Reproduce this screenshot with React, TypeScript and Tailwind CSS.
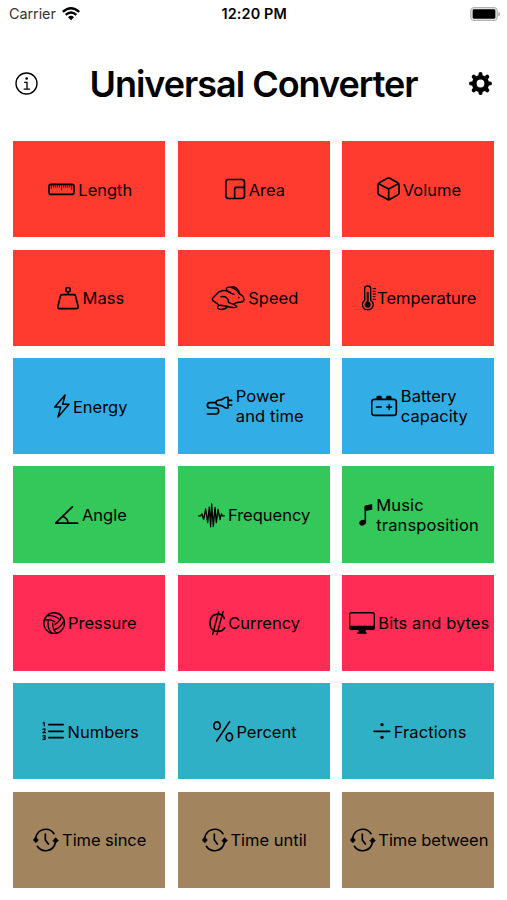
import type { ReactNode } from "react";

type GlyphProps = { box: string; size: string; children: ReactNode };

function Glyph({ box, size, children }: GlyphProps) {
  return (
    <svg
      viewBox={box}
      className={`h-7 shrink-0 ${size}`}
      fill="none"
      stroke="currentColor"
      strokeWidth="5"
      strokeLinecap="round"
      strokeLinejoin="round"
      aria-hidden="true"
    >
      {children}
    </svg>
  );
}

function Clock({ size, box }: { size: string; box: string }) {
  return (
    <Glyph box={box} size={size}>
      <path d="M110 470A30 30 0 0 1 164 460M168 488A30 30 0 0 1 114 498M138 461V479L147 491" />
      <path d="M102 479L109 470L117 479L110 487ZM161 481L169 472L177 481L169 488Z" fill="currentColor" strokeWidth="2" />
    </Glyph>
  );
}

type Tile = { label: string; text: string; color: string; icon: ReactNode };

const RED = "bg-[#ff3b30]";
const BLUE = "bg-[#32ade6]";
const GREEN = "bg-[#34c759]";
const PINK = "bg-[#ff2d55]";
const TEAL = "bg-[#30b0c7]";
const BROWN = "bg-[#a2845e]";

const tiles: Tile[] = [
  {
    label: "Length",
    text: "w-[52.9px] pl-[0.6px]",
    color: RED,
    icon: (
      <Glyph box="144 136 89.1 84" size="w-[29.7px]">
        <rect x="147" y="164" width="75" height="30" rx="6" />
        <path strokeWidth="2.4" d="M154 166v10M160 166v7M166 166v7M172 166v7M178 166v7M185 166v15M191 166v7M197 166v7M203 166v7M209 166v7M215 166v13" />
      </Glyph>
    ),
  },
  {
    label: "Area",
    text: "w-[34.1px]",
    color: RED,
    icon: (
      <Glyph box="165 136 71.1 84" size="w-[23.7px]">
        <rect x="167.500" y="149.500" width="56" height="57" rx="8" />
        <path d="M223 173H199Q194 173 194 178V206" />
      </Glyph>
    ),
  },
  {
    label: "Volume",
    text: "w-[57.4px]",
    color: RED,
    icon: (
      <Glyph box="620 136 78.600 84" size="w-[26.2px]">
        <path d="M651 146Q655 144 659 146L682 159Q686 161 686 165V190Q686 194 682 196L659 209Q655 212 651 209L627 196Q623 194 623 190V165Q623 161 627 159ZM625 162L655 178L684 162M655 178V210" />
      </Glyph>
    ),
  },
  {
    label: "Mass",
    text: "w-[39.6px] pl-[0.8px]",
    color: RED,
    icon: (
      <Glyph box="172 116 73.200 84" size="w-[24.4px]">
        <circle cx="205" cy="133" r="6.500" />
        <path d="M205 140V148M187 148H222Q227 148 228 153L235 182Q237 190 229 190H180Q173 190 175 182L182 153Q183 148 187 148Z" />
      </Glyph>
    ),
  },
  {
    label: "Speed",
    text: "w-[48.6px] pl-[0.4px]",
    color: RED,
    icon: (
      <Glyph box="634 116 109.800 84" size="w-[36.6px]">
        <g strokeWidth="4.400">
          <path d="M692 141C676 132 658 135 650 147C645 154 637 157 638 163C640 168 649 170 656 178" />
          <path d="M703 147C691 143 679 136 680 129C684 122 702 126 710 134C715 138 717 142 719 146C727 148 733 156 733 163C732 169 726 171 719 171C711 171 706 173 702 176" />
          <path d="M697 125C705 122 718 131 720 145" />
          <path d="M664 154C678 151 688 160 686 171C697 176 711 178 711 185C706 189 692 186 680 183" />
          <path d="M680 183C672 181 664 178 658 180C651 183 652 191 660 192C669 193 678 191 682 185" />
        </g>
        <circle cx="717" cy="157" r="2.500" fill="currentColor" stroke="none" />
      </Glyph>
    ),
  },
  {
    label: "Temperature",
    text: "w-[98px] pl-[0.2px]",
    color: RED,
    icon: (
      <Glyph box="336 116 45 84" size="w-[15px]">
        <path strokeWidth="4" d="M344 165V130Q344 122 353 122T362 130V165C369 169 371 175 369 182C367 189 361 193 353 193C345 193 339 189 338 182C336 175 339 168 344 165Z" />
        <path strokeWidth="6" d="M353 142V172" />
        <circle cx="353" cy="178" r="9" fill="currentColor" stroke="none" />
        <path strokeWidth="3" d="M369 130H377M369 138H375M369 146H377M369 154H375M369 162H377" />
      </Glyph>
    ),
  },
  {
    label: "Energy",
    text: "w-[52.4px] pl-[0.7px]",
    color: BLUE,
    icon: (
      <Glyph box="162 111 54.600 84" size="w-[18.2px]">
        <path strokeWidth="4.600" d="M195 120L164 156H182L174 186L207 148H188Z" />
      </Glyph>
    ),
  },
  {
    label: "Power\nand time",
    text: "w-[66.6px] pb-[1.4px] pl-[0.7px] tracking-[0.1px]",
    color: BLUE,
    icon: (
      <Glyph box="618 111 87.600 84" size="w-[29.2px]">
        <path d="M684 127V159Q676 160 670 155Q666 151 660 151Q648 151 648 143T660 135Q666 135 670 131Q676 126 684 127ZM687 136H695M687 150H695M646 143H630Q622 143 622 151T630 159H648Q656 159 656 168T648 177H622" />
      </Glyph>
    ),
  },
  {
    label: "Battery\ncapacity",
    text: "w-[65.3px] pb-[1.4px] pl-[0.8px]",
    color: BLUE,
    icon: (
      <Glyph box="365 111 86.100 84" size="w-[28.7px]">
        <rect x="367" y="133" width="74" height="48" rx="8" />
        <path strokeWidth="4" d="M381 156H396M412 156H427M419.500 148.500V163.500" />
        <path d="M382 131V127Q382 123 386 123H393Q397 123 397 127V131ZM411 131V127Q411 123 415 123H422Q426 123 426 127V131Z" fill="currentColor" strokeWidth="1.500" />
      </Glyph>
    ),
  },
  {
    label: "Angle",
    text: "w-[42.5px] pl-[0.3px]",
    color: GREEN,
    icon: (
      <Glyph box="164 436.500 81.300 84" size="w-[27.1px]">
        <path d="M216 454L166 503H232M188 483Q202 489 203 502" />
      </Glyph>
    ),
  },
  {
    label: "Frequency",
    text: "w-[82.6px] pl-[0.8px]",
    color: GREEN,
    icon: (
      <Glyph box="594 436.500 87.600 84" size="w-[29.2px]">
        <path strokeWidth="4" d="M596 481H602L606 475L611 492L617 460L623 501L628 455L632 514L635 445L640 513L645 456L649 501L654 462L660 492L664 475L668 481H673" />
      </Glyph>
    ),
  },
  {
    label: "Music\ntransposition",
    text: "w-[101.8px] pl-[0.8px] tracking-[0.1px]",
    color: GREEN,
    icon: (
      <Glyph box="329 436.500 48.600 84" size="w-[16.2px]">
        <path strokeWidth="4.500" d="M348 453V500" />
        <path d="M348 452L367 448V461L348 465Z" fill="currentColor" strokeWidth="3.500" />
        <ellipse cx="340" cy="501.500" rx="10.500" ry="8.500" transform="rotate(-20 340 501.500)" fill="currentColor" stroke="none" />
      </Glyph>
    ),
  },
  {
    label: "Pressure",
    text: "w-[68.4px] pl-[0.5px]",
    color: PINK,
    icon: (
      <Glyph box="128.500 116.700 73.800 84" size="w-[24.6px]">
        <g transform="translate(162 159)" strokeWidth="4">
          <circle r="31" />
          <path d="M2 -4Q-13 -13 -29 -9M-21 -22Q0 -25 18 -10" />
          <path transform="rotate(120)" d="M2 -4Q-13 -13 -29 -9M-21 -22Q0 -25 18 -10" />
          <path transform="rotate(240)" d="M2 -4Q-13 -13 -29 -9M-21 -22Q0 -25 18 -10" />
        </g>
      </Glyph>
    ),
  },
  {
    label: "Currency",
    text: "w-[70.9px] pl-[0.3px]",
    color: PINK,
    icon: (
      <Glyph box="627 116.700 56.700 84" size="w-[18.9px]">
        <path d="M673 145C670 136 664 132 655 132C639 132 630 142 630 160C630 178 639 184 655 184C664 184 670 180 674 173" />
        <path strokeWidth="4.200" d="M656 125L638 193M669 125L651 193" />
      </Glyph>
    ),
  },
  {
    label: "Bits and bytes",
    text: "w-[110.5px] pl-[0.8px] tracking-[0.07px]",
    color: PINK,
    icon: (
      <Glyph box="297 116.700 86.700 84" size="w-[28.9px]">
        <rect x="299" y="128" width="74" height="50" rx="5" strokeWidth="4" />
        <path d="M300 168H372V175Q372 178 368 178H304Q300 178 300 175Z" fill="currentColor" strokeWidth="2" />
        <path d="M327 179H346V187H349V190H323V187H327Z" fill="currentColor" strokeWidth="2" />
      </Glyph>
    ),
  },
  {
    label: "Numbers",
    text: "w-[70.1px] pl-[0.8px]",
    color: TEAL,
    icon: (
      <Glyph box="125.500 112 74.700 84" size="w-[24.9px]">
        <path d="M146 135H189M146 155H189M146 174H189" />
        <path strokeWidth="3.400" d="M129 130L132 128V139M128 149Q134 146 135 150Q135 153 128 159H136M128 169Q136 166 135 171Q134 174 131 174Q136 174 135 178Q132 181 128 179" />
      </Glyph>
    ),
  },
  {
    label: "Percent",
    text: "w-[59.1px] pl-[0.8px]",
    color: TEAL,
    icon: (
      <Glyph box="639 112 68.100 84" size="w-[22.7px]">
        <ellipse cx="651" cy="138" rx="9.500" ry="11.500" />
        <ellipse cx="688" cy="172" rx="9.500" ry="11.500" />
        <path strokeWidth="4.800" d="M689 126L650 184" />
      </Glyph>
    ),
  },
  {
    label: "Fractions",
    text: "w-[71.3px] pl-[0.8px] tracking-[0.1px]",
    color: TEAL,
    icon: (
      <Glyph box="368 112 60.900 84" size="w-[20.3px]">
        <path d="M371 155H418" />
        <circle cx="395" cy="135" r="5" fill="currentColor" stroke="none" />
        <circle cx="395" cy="173" r="5" fill="currentColor" stroke="none" />
      </Glyph>
    ),
  },
  {
    label: "Time since",
    text: "w-[83.4px] tracking-[-0.07px]",
    color: BROWN,
    icon: <Clock box="101 437 87 84" size="w-[29px]" />,
  },
  {
    label: "Time until",
    text: "w-[75.3px]",
    color: BROWN,
    icon: <Clock box="101 437 85.500 84" size="w-[28.5px]" />,
  },
  {
    label: "Time between",
    text: "w-[108.5px] tracking-[-0.08px]",
    color: BROWN,
    icon: <Clock box="101 437 85.500 84" size="w-[28.5px]" />,
  },
];

function StatusBar() {
  return (
    <div className="grid h-[27px] grid-cols-3 items-center pr-[6.5px] pl-[9px] text-[14.4px] leading-none">
      <div className="flex items-center gap-[6px] text-[#333]">
        <span className="pt-[2px] tracking-[-0.05px]">Carrier</span>
        <svg viewBox="0 0 54 42" className="h-[14px] w-[18px] text-black" fill="none" stroke="currentColor" strokeWidth="7" aria-hidden="true">
          <path d="M2.500 14.500Q27 -7 51.500 14.500M11 23.500Q27 9 43 23.500" />
          <path d="M18 30.500Q27 22.500 36 30.500L27 40Z" fill="currentColor" stroke="none" />
        </svg>
      </div>
      <div className="pt-[2px] pr-[1px] text-center font-semibold tracking-[0.15px] whitespace-nowrap">12:20 PM</div>
      <div className="flex justify-end">
        <svg viewBox="0 0 92 42" className="h-[14px] w-[30.7px]" aria-hidden="true">
          <rect x="2" y="1.500" width="80" height="39" rx="10" fill="#e0e0e0" stroke="#b0b0b0" strokeWidth="3" />
          <rect x="8" y="7" width="68" height="28" rx="4" />
          <path d="M85 14Q91 17 91 21T85 28Z" fill="#aaa" />
        </svg>
      </div>
    </div>
  );
}

function Header() {
  return (
    <header className="flex h-[114.3px] items-center justify-between pr-[14.5px] pl-[14.5px]">
      <svg viewBox="0 0 69 69" className="mb-px size-[23px]" fill="none" stroke="currentColor" strokeWidth="4" aria-hidden="true">
        <circle cx="34.500" cy="34.500" r="31.500" />
        <path d="M27.500 31H36V50M26 51.500H45" />
        <circle cx="35" cy="19.500" r="4" fill="currentColor" stroke="none" />
      </svg>
      <h1 className="text-[36px] leading-none font-semibold tracking-[-1.02px] whitespace-nowrap">Universal Converter</h1>
      <svg viewBox="-34 -34 68 68" className="mb-px size-[23px]" aria-hidden="true">
        <circle r="18.500" fill="none" stroke="currentColor" strokeWidth="14" />
        <g stroke="currentColor" strokeWidth="12" strokeLinecap="round">
          <path d="M0 -22V-28M0 22V28M-22 0H-28M22 0H28" />
          <path d="M15.500 -15.500L20 -20M-15.500 -15.500L-20 -20M15.500 15.500L20 20M-15.500 15.500L-20 20" />
        </g>
      </svg>
    </header>
  );
}

export default function App() {
  return (
    <main className="h-[900px] w-[507px] overflow-hidden bg-white font-['Inter','Liberation_Sans',sans-serif] text-black">
      <StatusBar />
      <Header />
      <div className="grid auto-rows-[96.2px] grid-cols-3 gap-x-[12.3px] gap-y-[12.2px] pr-[12.5px] pl-[13.2px]">
        {tiles.map((tile) => (
          <button
            key={tile.label}
            type="button"
            className={`flex items-center justify-center text-left text-[16.5px] leading-[20.3px] ${tile.color}`}
          >
            {tile.icon}
            <span className={`shrink-0 pt-[1.4px] whitespace-pre ${tile.text}`}>{tile.label}</span>
          </button>
        ))}
      </div>
    </main>
  );
}
